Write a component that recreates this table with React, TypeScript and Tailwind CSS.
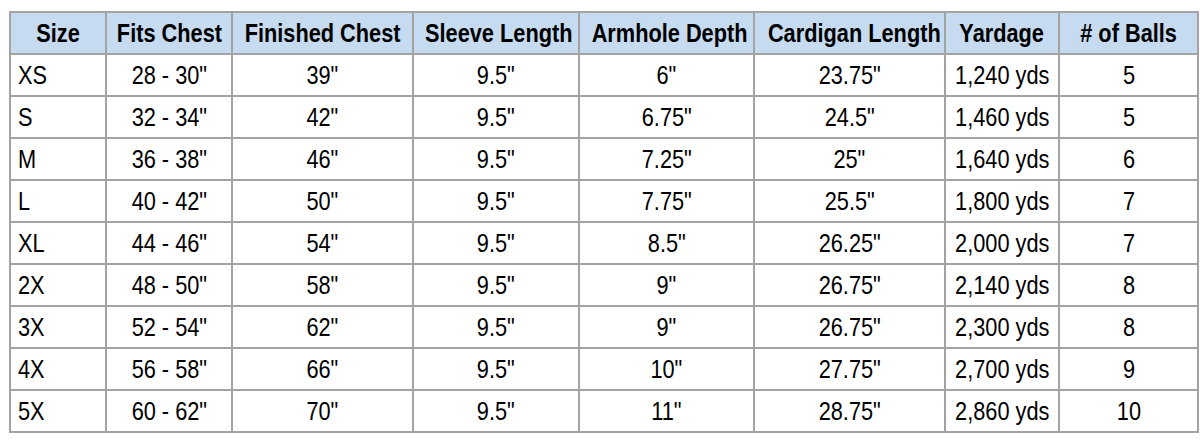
const COLUMNS = [
  { label: "Size", width: "w-[96px]" },
  { label: "Fits Chest", width: "w-[126px]" },
  { label: "Finished Chest", width: "w-[181px]" },
  { label: "Sleeve Length", width: "w-[166px]" },
  { label: "Armhole Depth", width: "w-[175px]" },
  { label: "Cardigan Length", width: "w-[191px]" },
  { label: "Yardage", width: "w-[114px]" },
  { label: "# of Balls", width: "w-[139px]" },
];

const ROWS = [
  ["XS", '28 - 30"', '39"', '9.5"', '6"', '23.75"', "1,240 yds", "5"],
  ["S", '32 - 34"', '42"', '9.5"', '6.75"', '24.5"', "1,460 yds", "5"],
  ["M", '36 - 38"', '46"', '9.5"', '7.25"', '25"', "1,640 yds", "6"],
  ["L", '40 - 42"', '50"', '9.5"', '7.75"', '25.5"', "1,800 yds", "7"],
  ["XL", '44 - 46"', '54"', '9.5"', '8.5"', '26.25"', "2,000 yds", "7"],
  ["2X", '48 - 50"', '58"', '9.5"', '9"', '26.75"', "2,140 yds", "8"],
  ["3X", '52 - 54"', '62"', '9.5"', '9"', '26.75"', "2,300 yds", "8"],
  ["4X", '56 - 58"', '66"', '9.5"', '10"', '27.75"', "2,700 yds", "9"],
  ["5X", '60 - 62"', '70"', '9.5"', '11"', '28.75"', "2,860 yds", "10"],
];

// no narrow face installed, so squeeze Liberation Sans horizontally
function Narrow({ children, left }: { children: string; left?: boolean }) {
  return (
    <span
      className={`inline-block whitespace-nowrap scale-x-[0.87] ${
        left ? "origin-left" : "origin-center"
      }`}
    >
      {children}
    </span>
  );
}

export default function App() {
  return (
    <div className="min-h-[442px] bg-white pl-[9px] pt-[11px]">
      <table className="w-[1188px] table-fixed border-collapse font-['Liberation_Sans',Arial,sans-serif] text-[25px] text-black">
        <thead>
          <tr className="h-[42px] bg-[#c6dbef]">
            {COLUMNS.map((col) => (
              <th
                key={col.label}
                className={`${col.width} overflow-visible border-2 border-[#a3a3a3] p-0 text-center font-bold leading-none`}
              >
                <Narrow>{col.label}</Narrow>
              </th>
            ))}
          </tr>
        </thead>
        <tbody>
          {ROWS.map((row) => (
            <tr key={row[0]} className="h-[42px]">
              {row.map((cell, i) => (
                <td
                  key={i}
                  className={`border-2 border-[#a3a3a3] p-0 leading-none ${
                    i === 0 ? "pl-[7px] text-left" : "text-center"
                  }`}
                >
                  <Narrow left={i === 0}>{cell}</Narrow>
                </td>
              ))}
            </tr>
          ))}
        </tbody>
      </table>
    </div>
  );
}
